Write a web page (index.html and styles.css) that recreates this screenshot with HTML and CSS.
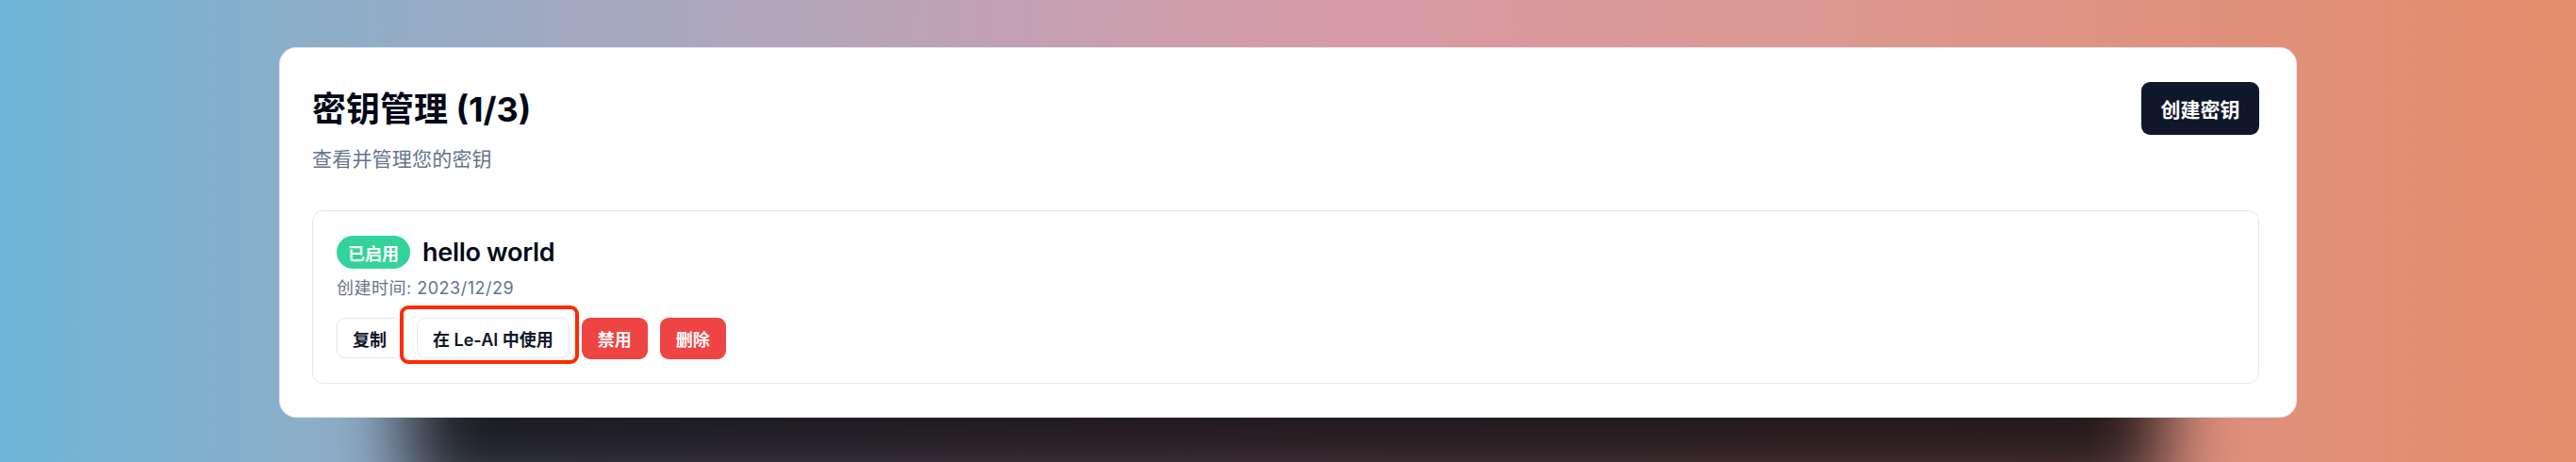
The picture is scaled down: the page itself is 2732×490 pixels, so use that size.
FILE: index.html
```html
<!DOCTYPE html>
<html lang="zh-CN">
<head>
<meta charset="utf-8">
<title>密钥管理</title>
<link rel="stylesheet" href="styles.css">
</head>
<body>
<div class="page">
  <section class="card">
    <header class="card-header">
      <div class="heading">
        <h1 class="title">密钥管理 (1/3)</h1>
        <p class="subtitle">查看并管理您的密钥</p>
      </div>
      <button class="btn btn-dark">创建密钥</button>
    </header>
    <div class="key-item">
      <div class="key-head">
        <span class="badge">已启用</span>
        <span class="key-name">hello world</span>
      </div>
      <div class="key-date">创建时间: 2023/12/29</div>
      <div class="key-actions">
        <button class="btn btn-outline btn-first">复制</button>
        <button class="btn btn-outline">在 Le-AI 中使用</button>
        <button class="btn btn-red">禁用</button>
        <button class="btn btn-red">删除</button>
        <span class="highlight"></span>
      </div>
    </div>
  </section>
</div>
</body>
</html>
```
FILE: styles.css
```css
* { box-sizing: border-box; }
html, body { margin: 0; padding: 0; }
body {
  width: 2732px;
  height: 490px;
  overflow: hidden;
  font-family: "Inter", "Noto Sans CJK SC", sans-serif;
  background: linear-gradient(90deg, #6eb5d8 0%, #8caec9 12%, #b2a6bb 30%, #d59ba8 50%, #dc9892 70%, #e0907a 88%, #e48d6c 100%);
}
.page {
  height: 490px;
  overflow: hidden;
  padding-top: 50px;
}
.card {
  position: relative;
  width: 2140px;
  margin: 0 auto;
  background: #ffffff;
  border: 1px solid #e2e8f0;
  border-radius: 18px;
  padding: 36px 39px 35px 34px;
}
.card::before {
  content: "";
  position: absolute;
  left: 135px;
  right: 140px;
  top: 200px;
  bottom: -90px;
  background: rgba(10, 8, 12, 0.88);
  filter: blur(40px);
  z-index: -1;
}
.card-header {
  display: flex;
  justify-content: space-between;
  align-items: flex-start;
}
.heading { padding-top: 5px; }
.title {
  margin: 0;
  font-size: 36px;
  line-height: 48px;
  font-weight: 700;
  color: #020817;
}
.subtitle {
  margin: 14px 0 0;
  font-size: 21px;
  line-height: 30px;
  color: #64748b;
  letter-spacing: 0.2px;
}
.btn {
  font-family: inherit;
  display: inline-flex;
  align-items: center;
  justify-content: center;
  border-radius: 9px;
  cursor: pointer;
  white-space: nowrap;
}
.btn-dark {
  height: 56px;
  width: 125px;
  padding: 0;
  border: none;
  background: #0f172a;
  color: #ffffff;
  font-size: 21px;
  font-weight: 600;
}
.key-item {
  margin-top: 39px;
  border: 1px solid #e2e8f0;
  border-radius: 12px;
  padding: 26px 24px 25px 25px;
}
.key-head {
  display: flex;
  align-items: center;
  gap: 13px;
  height: 35px;
}
.badge {
  height: 35px;
  padding: 0 12px;
  border-radius: 999px;
  background: #34d399;
  color: #ffffff;
  font-size: 18px;
  font-weight: 700;
  display: inline-flex;
  align-items: center;
}
.key-name {
  font-size: 27px;
  font-weight: 600;
  color: #020817;
  letter-spacing: -0.3px;
}
.key-date {
  margin-top: 7px;
  font-size: 18px;
  line-height: 27px;
  color: #64748b;
  letter-spacing: 0.5px;
}
.key-actions {
  position: relative;
  margin-top: 18px;
  display: flex;
  gap: 13px;
}
.btn-outline {
  height: 43px;
  padding: 0 16px;
  background: #ffffff;
  border: 1px solid #e2e8f0;
  color: #0f172a;
  font-size: 18px;
  font-weight: 600;
}
.btn-first { margin-right: 2px; }
.btn-red {
  height: 44px;
  padding: 0 17px;
  background: #ef4444;
  border: none;
  color: #ffffff;
  font-size: 18px;
  font-weight: 600;
}
.highlight {
  position: absolute;
  left: 67px;
  top: -13px;
  width: 190px;
  height: 62px;
  border: 4px solid #ff2a00;
  border-radius: 9px;
  pointer-events: none;
}
```
